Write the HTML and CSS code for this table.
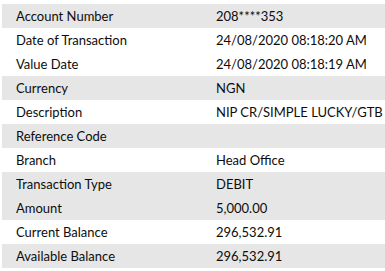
FILE: index.html
```html
<!DOCTYPE html>
<html>
<head>
<meta charset="utf-8">
<link rel="stylesheet" href="styles.css">
</head>
<body>
<div class="details">
  <div class="row shade"><div class="label">Account Number</div><div class="value">208****353</div></div>
  <div class="row"><div class="label">Date of Transaction</div><div class="value">24/08/2020 08:18:20 AM</div></div>
  <div class="row"><div class="label">Value Date</div><div class="value">24/08/2020 08:18:19 AM</div></div>
  <div class="row shade"><div class="label">Currency</div><div class="value">NGN</div></div>
  <div class="row"><div class="label">Description</div><div class="value">NIP CR/SIMPLE LUCKY/GTB</div></div>
  <div class="row shade"><div class="label">Reference Code</div><div class="value"></div></div>
  <div class="row"><div class="label">Branch</div><div class="value">Head Office</div></div>
  <div class="row shade"><div class="label">Transaction Type</div><div class="value">DEBIT</div></div>
  <div class="row shade"><div class="label">Amount</div><div class="value">5,000.00</div></div>
  <div class="row"><div class="label">Current Balance</div><div class="value">296,532.91</div></div>
  <div class="row shade"><div class="label">Available Balance</div><div class="value">296,532.91</div></div>
</div>
</body>
</html>
```
FILE: styles.css
```css
html, body {
  margin: 0;
  padding: 0;
  background: #ffffff;
}
body {
  padding: 4px 0 0 2px;
  font-family: Lato, "Liberation Sans", sans-serif;
  font-size: 13px;
  color: #0d0d0d;
}
.details {
  display: flex;
  flex-direction: column;
}
.row {
  display: grid;
  grid-template-columns: 214px 1fr;
  height: 24px;
  line-height: 24px;
}
.shade {
  background: #e6e6e6;
}
.label {
  padding-left: 14px;
  white-space: nowrap;
}
.value {
  white-space: nowrap;
}
```
